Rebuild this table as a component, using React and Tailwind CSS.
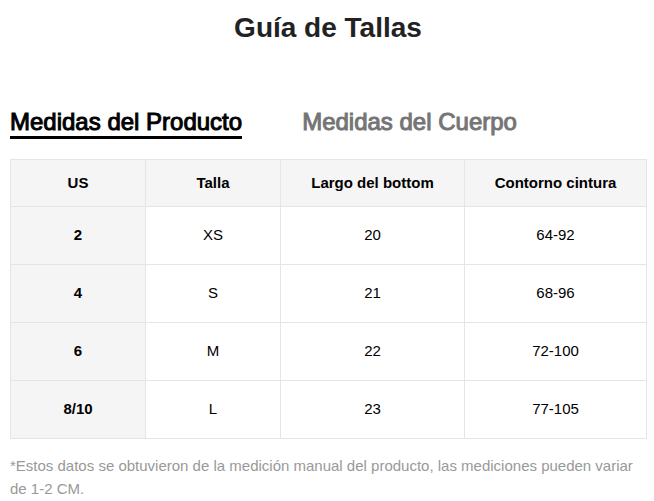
const rows = [
  { us: "2", talla: "XS", largo: "20", cintura: "64-92" },
  { us: "4", talla: "S", largo: "21", cintura: "68-96" },
  { us: "6", talla: "M", largo: "22", cintura: "72-100" },
  { us: "8/10", talla: "L", largo: "23", cintura: "77-105" },
];

const SizeGuide = () => {
  return (
    <div className="min-h-screen bg-white pl-[10px] pr-[8px] font-['Liberation_Sans',Arial,sans-serif]">
      <h1 className="pt-[12px] text-center text-[28px] leading-[32px] font-bold text-[#222]">
        Guía de Tallas
      </h1>

      <div className="mt-[64px] flex items-start gap-[60px] text-[24px] leading-[28px] font-normal [-webkit-text-stroke:1px_currentColor]">
        <div className="border-b-[3px] border-black pb-0 text-black">
          Medidas del Producto
        </div>
        <div className="text-[#757575]">Medidas del Cuerpo</div>
      </div>

      <table className="mt-[20px] w-[636px] table-fixed border-collapse text-center text-[15px] text-black">
        <colgroup>
          <col className="w-[135px]" />
          <col className="w-[135px]" />
          <col className="w-[184px]" />
          <col className="w-[182px]" />
        </colgroup>
        <thead>
          <tr className="h-[47px] bg-[#f5f5f5] font-bold">
            <th className="border border-[#e5e5e5]">US</th>
            <th className="border border-[#e5e5e5]">Talla</th>
            <th className="border border-[#e5e5e5]">Largo del bottom</th>
            <th className="border border-[#e5e5e5]">Contorno cintura</th>
          </tr>
        </thead>
        <tbody>
          {rows.map((row) => (
            <tr key={row.us} className="h-[58px]">
              <td className="border border-[#e5e5e5] bg-[#f5f5f5] font-bold">
                {row.us}
              </td>
              <td className="border border-[#e5e5e5]">{row.talla}</td>
              <td className="border border-[#e5e5e5]">{row.largo}</td>
              <td className="border border-[#e5e5e5]">{row.cintura}</td>
            </tr>
          ))}
        </tbody>
      </table>

      <p className="mt-[15px] text-[15px] leading-[23px] text-[#999]">
        *Estos datos se obtuvieron de la medición manual del producto, las
        mediciones pueden variar de 1-2 CM.
      </p>
    </div>
  );
};

export default function App() {
  return <SizeGuide />;
}
